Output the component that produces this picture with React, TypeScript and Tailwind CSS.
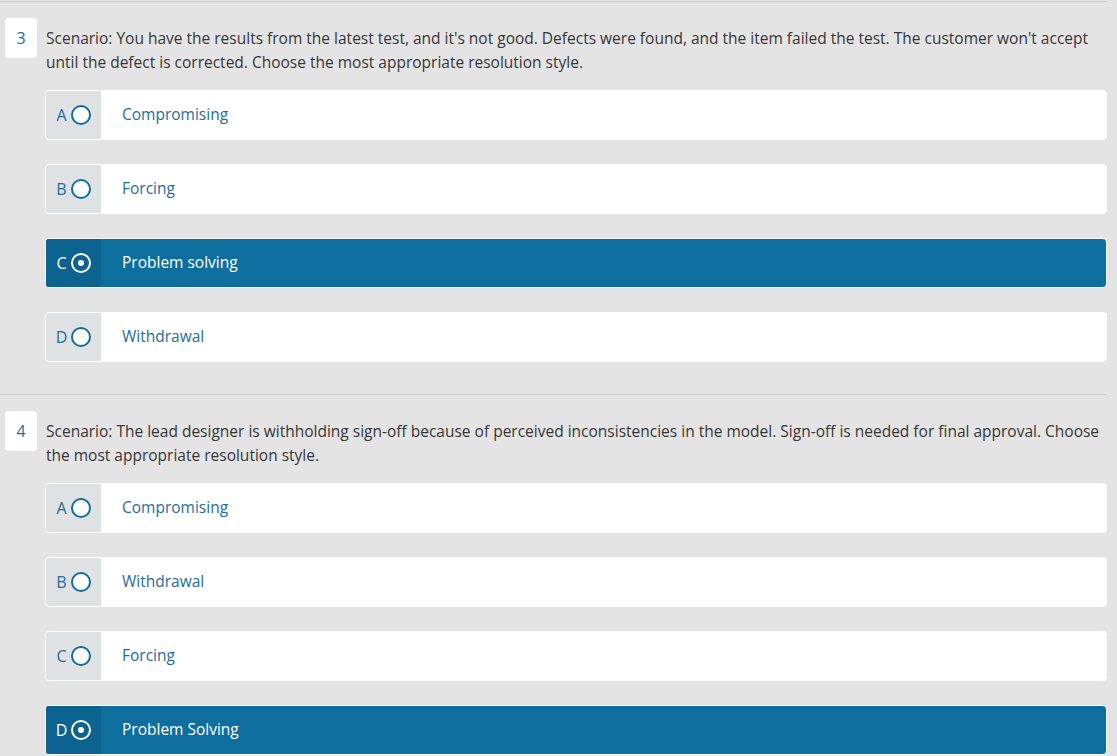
import React from "react";

type Option = { letter: string; label: string; selected?: boolean };

type Question = { num: number; text: string; options: Option[] };

const questions: Question[] = [
  {
    num: 3,
    text: "Scenario: You have the results from the latest test, and it's not good. Defects were found, and the item failed the test. The customer won't accept until the defect is corrected. Choose the most appropriate resolution style.",
    options: [
      { letter: "A", label: "Compromising" },
      { letter: "B", label: "Forcing" },
      { letter: "C", label: "Problem solving", selected: true },
      { letter: "D", label: "Withdrawal" },
    ],
  },
  {
    num: 4,
    text: "Scenario: The lead designer is withholding sign-off because of perceived inconsistencies in the model. Sign-off is needed for final approval. Choose the most appropriate resolution style.",
    options: [
      { letter: "A", label: "Compromising" },
      { letter: "B", label: "Withdrawal" },
      { letter: "C", label: "Forcing" },
      { letter: "D", label: "Problem Solving", selected: true },
    ],
  },
];

function Radio({ checked }: { checked?: boolean }) {
  return (
    <span
      className={
        "flex items-center justify-center w-[20px] h-[20px] rounded-full border-2 " +
        (checked ? "border-white" : "border-[#0e6e9e] bg-white")
      }
    >
      {checked && <span className="w-[6px] h-[6px] rounded-full bg-white" />}
    </span>
  );
}

function OptionRow({ opt }: { opt: Option }) {
  const sel = opt.selected;
  return (
    <div
      className={
        "flex h-[50px] rounded-[4px] border border-white overflow-hidden " +
        (sel ? "bg-[#0e6e9e]" : "bg-white")
      }
    >
      <div
        className={
          "w-[55px] flex items-center justify-center gap-[4px] " +
          (sel ? "bg-[#0c6390] text-white" : "bg-[#e0e1e3] text-[#1e6d9c]")
        }
      >
        <span className="text-[16px]">{opt.letter}</span>
        <Radio checked={sel} />
      </div>
      <div
        className={
          "flex items-center pl-[21px] text-[15.5px] " +
          (sel ? "text-white" : "text-[#1e6d9c]")
        }
      >
        {opt.label}
      </div>
    </div>
  );
}

function QuestionBlock({ q }: { q: Question }) {
  return (
    <div className="border-t border-[#cccccc] pt-[16px] pb-[32px] mr-[10px]">
      <div className="flex">
        <div className="ml-[5px] w-[32px] h-[40px] shrink-0 rounded-[4px] bg-white flex items-center justify-center text-[16px] text-[#1e6d9c]">
          {q.num}
        </div>
        <p className="ml-[9px] mt-[8px] text-[15.5px] leading-[24px] text-[#363636]">
          {q.text}
        </p>
      </div>
      <div className="ml-[45px] mt-[16px] flex flex-col gap-[24px]">
        {q.options.map((o) => (
          <OptionRow key={o.letter} opt={o} />
        ))}
      </div>
    </div>
  );
}

export default function App() {
  return (
    <div
      className="min-h-screen bg-[#e4e4e4] pt-[1px]"
      style={{ fontFamily: '"Open Sans", "Noto Sans", sans-serif' }}
    >
      {questions.map((q) => (
        <QuestionBlock key={q.num} q={q} />
      ))}
    </div>
  );
}
